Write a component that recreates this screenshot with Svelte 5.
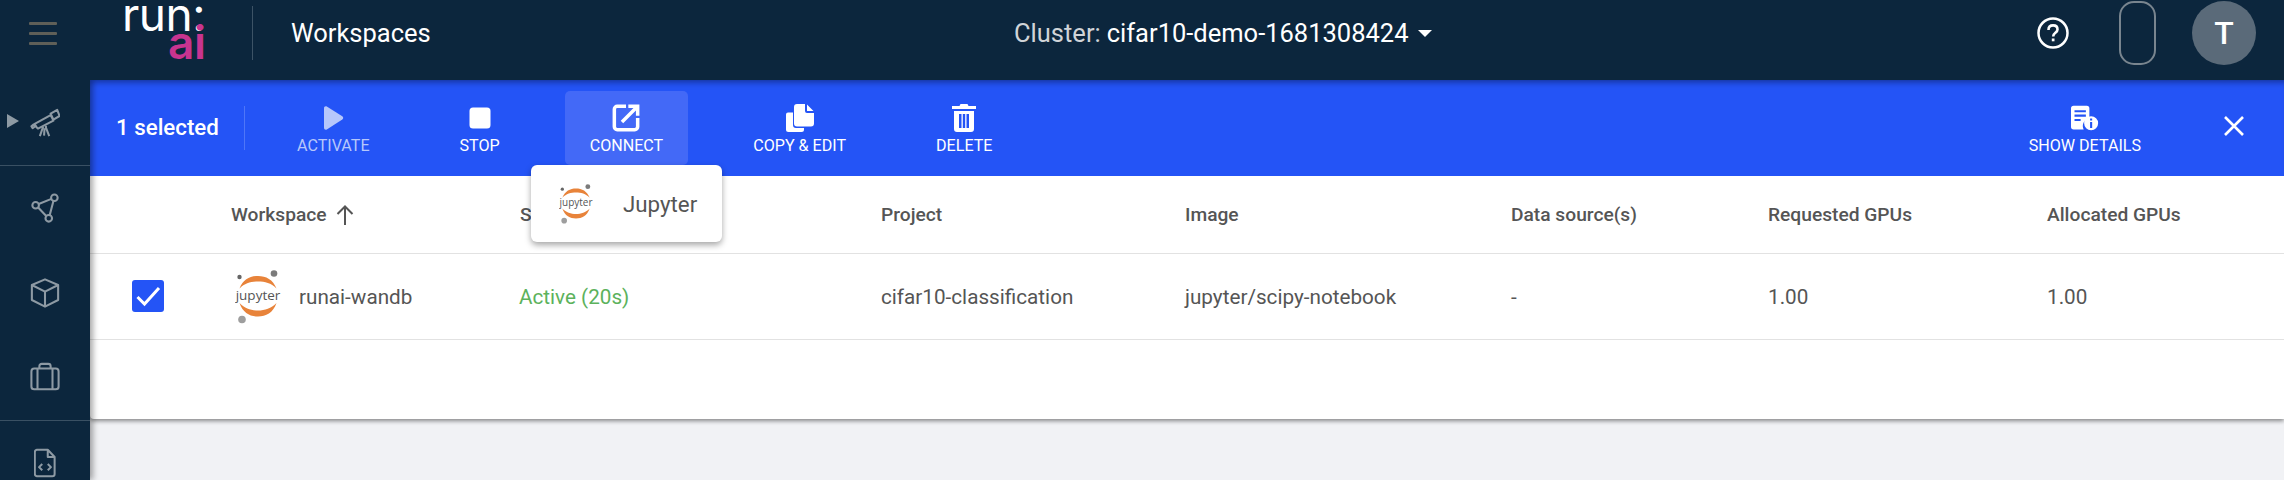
<script lang="ts">
	const columns = [
		{ label: 'Workspace', sort: true },
		{ label: 'Status' },
		{ label: 'Project' },
		{ label: 'Image' },
		{ label: 'Data source(s)' },
		{ label: 'Requested GPUs' },
		{ label: 'Allocated GPUs' }
	];

	const row = {
		status: 'Active (20s)',
		project: 'cifar10-classification',
		image: 'jupyter/scipy-notebook',
		sources: '-',
		requested: '1.00',
		allocated: '1.00'
	};
</script>

{#snippet jupyter(cls: string)}
	<svg class={cls} viewBox="0 0 46 54" aria-hidden="true">
		<path d="M4.500 18.500C8 9.500 15 6 23 6s15 3.500 18.500 12.500C36 13 30 11.500 23 11.500S10 13 4.500 18.500z" fill="#e8833a" />
		<path d="M4.500 33C8 43 15 46.500 23 46.500S38 43 41.500 33C36 38.500 30 40.500 23 40.500S10 38.500 4.500 33z" fill="#e8833a" />
		<circle cx="39" cy="3.500" r="3.300" fill="#7b7b7b" />
		<circle cx="4.500" cy="7" r="2.200" fill="#666" />
		<circle cx="7" cy="49.500" r="3.800" fill="#9e9e9e" />
		<text x="23" y="29.500" text-anchor="middle" class="jup-word">jupyter</text>
	</svg>
{/snippet}

<div class="page">
	<header class="topbar">
		<div class="burger"><span></span><span></span><span></span></div>
		<div class="logo">
			<span class="logo-run">run:</span>
			<span class="logo-ai">ai</span>
		</div>
		<div class="top-divider"></div>
		<div class="title">Workspaces</div>
		<div class="cluster">
			<span class="cluster-label">Cluster:</span> cifar10-demo-1681308424
			<span class="caret"></span>
		</div>
		<svg class="help" viewBox="0 0 32 32" aria-hidden="true">
			<circle cx="16" cy="16" r="14.500" fill="none" stroke="#fff" stroke-width="2.500" />
			<path d="M11.500 13c0-3 2-4.600 4.600-4.600s4.400 1.600 4.400 4c0 3.400-4.300 3.400-4.300 7" fill="none" stroke="#fff" stroke-width="2.600" />
			<rect x="14.800" y="21.500" width="2.700" height="2.800" fill="#fff" />
		</svg>
		<div class="pill"></div>
		<div class="avatar">T</div>
	</header>

	<nav class="sidebar">
		<div class="side-group first">
			<span class="side-arrow"></span>
			<svg class="side-icon" viewBox="0 0 32 32" aria-hidden="true">
				<path d="M1.500 19.500l2.500-2 1.300 2.200-2.500 1.800zM5 17l17-9.500 3 6-16.500 8.500-1.500-1.500zM22 6l7-4 2.500 6.500-6.500 4z" />
				<path d="M14 20l-3.500 10M17 19v2l3.500 9M15.500 21.500l-.5 8" />
			</svg>
		</div>
		<div class="side-group">
			<div class="side-item">
				<svg class="side-icon" viewBox="0 0 32 32" aria-hidden="true">
					<circle cx="6" cy="13" r="3.500" /><circle cx="26" cy="5" r="3.500" /><circle cx="20" cy="27" r="3.500" />
					<path d="M9.300 11.700L22.800 6.300M25 8.500L21 23.600M8.700 15.400L17.300 24.600" />
				</svg>
			</div>
			<div class="side-item">
				<svg class="side-icon" viewBox="0 0 32 32" aria-hidden="true">
					<path d="M16 1.500l14 6v16l-14 7-14-7v-16zM2 7.500l14 7 14-7M16 14.500v16" />
				</svg>
			</div>
			<div class="side-item">
				<svg class="side-icon" viewBox="0 0 32 32" aria-hidden="true">
					<rect x="1.500" y="7" width="29" height="22" rx="3" />
					<path d="M10 7V4.500A2.500 2.500 0 0 1 12.500 2h7A2.500 2.500 0 0 1 22 4.500V7M8 7v22M24 7v22" />
				</svg>
			</div>
		</div>
		<div class="side-group last">
			<svg class="side-icon file" viewBox="0 0 24 32" aria-hidden="true">
				<path d="M3 1.500h12l7.500 8V28a2.500 2.500 0 0 1-2.500 2.500H3A2.500 2.500 0 0 1 .9 28V4A2.500 2.500 0 0 1 3 1.500zM15 1.500v8h7.500" />
				<path d="M9 17l-3.500 3.500L9 24M15 17l3.500 3.500L15 24" />
			</svg>
		</div>
	</nav>

	<main class="main">
		<div class="card">
			<div class="toolbar">
				<div class="selected">1 selected</div>
				<div class="tool-divider"></div>
				<button class="tool disabled activate" type="button">
					<svg viewBox="0 0 24 24" aria-hidden="true"><path d="M3 2.200C3 .6 4.500-.2 5.800.6l15.500 9.700c1.200.8 1.200 2.500 0 3.300L5.800 23.400C4.500 24.200 3 23.400 3 21.800z" /></svg>
					ACTIVATE
				</button>
				<button class="tool" type="button">
					<svg viewBox="0 0 24 24" aria-hidden="true"><rect x="1.500" y="1.500" width="21" height="21" rx="3.500" /></svg>
					STOP
				</button>
				<button class="tool hovered" type="button">
					<svg class="wide" viewBox="0 0 24 24" aria-hidden="true"><path d="M19.500 20.500h-15a1 1 0 0 1-1-1v-15a1 1 0 0 1 1-1H12V.5H4.500A4 4 0 0 0 .5 4.500v15a4 4 0 0 0 4 4h15a4 4 0 0 0 4-4V12h-3v7.500a1 1 0 0 1-1 1zM14 .5v3h4.400L7.500 14.400l2.100 2.100L20.500 5.600V10h3V.5z" /></svg>
					CONNECT
				</button>
				<button class="tool" type="button">
					<svg class="wide" viewBox="0 0 28 28" aria-hidden="true">
						<path d="M2 8.500h5V21a3 3 0 0 0 3 3h8v1.500A2.500 2.500 0 0 1 15.500 28h-13A2.500 2.500 0 0 1 0 25.500V10.500a2 2 0 0 1 2-2z" />
						<path d="M11 0h8v7a2 2 0 0 0 2 2h7v10.500a3 3 0 0 1-3 3H11a3 3 0 0 1-3-3V3a3 3 0 0 1 3-3zM21 .5L27.500 7H21z" />
					</svg>
					COPY &amp; EDIT
				</button>
				<button class="tool" type="button">
					<svg class="wide" viewBox="0 0 24 28" aria-hidden="true">
						<path d="M8.500 0h7l1 2H24v3H0V2h7.500zM2 7h20v18a3 3 0 0 1-3 3H5a3 3 0 0 1-3-3zM7 10v14h2.500V10zM10.800 10v14h2.400V10zM14.500 10v14H17V10z" fill-rule="evenodd" />
					</svg>
					DELETE
				</button>
				<button class="tool details" type="button">
					<svg class="wide" viewBox="0 0 32 28" aria-hidden="true">
						<path d="M3 0h15a3 3 0 0 1 3 3v11.500a8.500 8.500 0 0 0-6.500 12.500H3a3 3 0 0 1-3-3V3a3 3 0 0 1 3-3zM4 5v2.500h13V5zM4 10v2.500h13V10zM4 15v2.500h7V15z" fill-rule="evenodd" />
						<path d="M23 12a8 8 0 1 1 0 16 8 8 0 0 1 0-16zM21.800 14.500v2.400h2.400v-2.400zM21.800 18.500v7h2.400v-7z" fill-rule="evenodd" />
					</svg>
					SHOW DETAILS
				</button>
				<button class="close" type="button" aria-label="Close">
					<svg viewBox="0 0 20 20" aria-hidden="true"><path d="M1 1l18 18M19 1L1 19" /></svg>
				</button>
			</div>

			<div class="grid-row head">
				{#each columns as c}
					<div class="cell">
						{c.label}
						{#if c.sort}
							<svg class="sort" viewBox="0 0 18 20" aria-hidden="true"><path d="M9 20V2M1.500 9L9 1.500 16.500 9" /></svg>
						{/if}
					</div>
				{/each}
			</div>

			<div class="grid-row body">
				<div class="name-cell">
					{@render jupyter('jup-row')}
					<span>runai-wandb</span>
				</div>
				<div class="cell status">{row.status}</div>
				<div class="cell">{row.project}</div>
				<div class="cell">{row.image}</div>
				<div class="cell">{row.sources}</div>
				<div class="cell">{row.requested}</div>
				<div class="cell">{row.allocated}</div>
				<span class="checkbox">
					<svg viewBox="0 0 32 32" aria-hidden="true"><path d="M5.500 17l7 7L27 8" /></svg>
				</span>
			</div>

			<div class="menu">
				{@render jupyter('jup-menu')}
				<span>Jupyter</span>
			</div>
		</div>
	</main>
</div>

<style>
	:global(body) {
		margin: 0;
		font-family: Roboto, 'Liberation Sans', sans-serif;
	}

	.page {
		display: grid;
		grid-template-columns: 90px 1fr;
		grid-template-rows: 80px 400px;
		width: 2284px;
		height: 480px;
		overflow: hidden;
		background: #f1f2f5;
	}

	.topbar {
		grid-column: 1 / 3;
		display: flex;
		align-items: center;
		height: 66px;
		padding-bottom: 14px;
		background: #0c263d;
		color: #fff;
		position: relative;
		z-index: 3;
	}

	.burger {
		display: flex;
		flex-direction: column;
		gap: 7px;
		width: 28px;
		margin-left: 29px;
	}

	.burger span {
		height: 3px;
		background: #5f5f58;
		border-radius: 1px;
	}

	.logo {
		position: relative;
		width: 90px;
		height: 66px;
		margin-left: 65px;
		flex-shrink: 0;
	}

	.logo-run,
	.logo-ai {
		position: absolute;
		font-family: Inter, Roboto, sans-serif;
		line-height: 1;
		font-size: 46px;
	}

	.logo-run {
		left: 0;
		top: -9px;
		font-weight: 400;
		color: #fff;
		letter-spacing: -0.5px;
	}

	.logo-ai {
		left: 46px;
		top: 19px;
		font-weight: 600;
		letter-spacing: -0.5px;
		color: #c8348f;
	}

	.top-divider {
		width: 1px;
		height: 54px;
		margin-left: 40px;
		background: #3d5366;
	}

	.title {
		margin-left: 38px;
		font-size: 25.500px;
		width: 723px;
	}

	.cluster {
		display: flex;
		align-items: center;
		gap: 6px;
		font-size: 25.500px;
		white-space: nowrap;
		width: 1105px;
	}

	.cluster-label {
		color: #d0d4d8;
	}

	.caret {
		width: 0;
		height: 0;
		margin-left: 3px;
		border-left: 7px solid transparent;
		border-right: 7px solid transparent;
		border-top: 7px solid #fff;
	}

	.help {
		position: absolute;
		left: 2037px;
		top: 17px;
		width: 32px;
		height: 32px;
	}

	.pill {
		position: absolute;
		left: 2119px;
		top: 1px;
		width: 37px;
		height: 64px;
		box-sizing: border-box;
		border: 2.500px solid #79858f;
		border-radius: 15px;
	}

	.avatar {
		position: absolute;
		left: 2192px;
		top: 1px;
		width: 64px;
		height: 64px;
		display: flex;
		align-items: center;
		justify-content: center;
		border-radius: 50%;
		background: #5a6a79;
		font-size: 32px;
		font-weight: 500;
	}

	.sidebar {
		display: flex;
		flex-direction: column;
		background: #0c263d;
		position: relative;
		z-index: 2;
		box-shadow: 3px 0 6px rgba(0, 0, 0, 0.35);
	}

	.side-group {
		border-bottom: 1px solid #3a5063;
		flex-shrink: 0;
	}

	.side-group.first {
		height: 85px;
		display: flex;
		align-items: center;
		justify-content: center;
		position: relative;
	}

	.side-group.last {
		border-bottom: none;
		display: flex;
		justify-content: center;
		padding-top: 27px;
	}

	.side-item {
		height: 84.500px;
		display: flex;
		align-items: center;
		justify-content: center;
	}

	.side-arrow {
		position: absolute;
		left: 7px;
		top: 34px;
		border-left: 12px solid #8e9aa4;
		border-top: 7px solid transparent;
		border-bottom: 7px solid transparent;
	}

	.side-icon {
		width: 30px;
		height: 30px;
		fill: none;
		stroke: #8e9aa4;
		stroke-width: 2.200;
		stroke-linejoin: round;
	}

	.side-icon.file {
		width: 22px;
		height: 30px;
	}

	.main {
		min-width: 0;
	}

	.card {
		position: relative;
		height: 339px;
		background: #fff;
		box-shadow: 0 2px 4px rgba(0, 0, 0, 0.45);
		border-bottom-left-radius: 4px;
		color: #555;
	}

	.toolbar {
		display: flex;
		align-items: flex-start;
		gap: 40px;
		height: 85px;
		padding: 11px 30px 0 26px;
		background: #2454f6;
		box-shadow: inset 0 7px 6px -5px rgba(8, 20, 70, 0.55);
		color: #fff;
	}

	.selected {
		height: 54px;
		margin-top: 9px;
		display: flex;
		align-items: center;
		width: 102px;
		font-size: 22.300px;
		font-weight: 500;
		white-space: nowrap;
		flex-shrink: 0;
	}

	.tool-divider {
		width: 1px;
		height: 44px;
		margin: 15px -13px 0 -14px;
		background: #4f76f8;
	}

	.tool {
		display: flex;
		flex-direction: column;
		align-items: center;
		height: 74px;
		padding: 13px 25px 0;
		box-sizing: border-box;
		gap: 4px;
		border: none;
		border-radius: 5px;
		background: none;
		color: #fff;
		font: 400 16.100px Roboto, sans-serif;
		white-space: nowrap;
	}

	.tool svg {
		width: 24px;
		height: 28px;
		fill: currentColor;
	}

	.tool svg.wide {
		width: 28px;
	}

	.tool.disabled {
		color: #b6c7fb;
	}

	.tool.hovered {
		background: #4369f7;
	}

	.tool.details {
		margin-left: auto;
	}

	.close {
		width: 40px;
		height: 40px;
		margin: 15px 0 0 8px;
		padding: 10px;
		background: none;
		border: none;
	}

	.close svg {
		display: block;
		fill: none;
		stroke: #fff;
		stroke-width: 2.600;
	}

	.grid-row {
		display: grid;
		grid-template-columns: 141px 289px 361px 304px 326px 257px 279px 1fr;
		align-items: center;
		border-bottom: 1px solid #e2e2e2;
		position: relative;
	}

	.grid-row.head {
		height: 77px;
		font-size: 19.200px;
		font-weight: 500;
	}

	.grid-row.head .cell:first-child {
		grid-column: 1 / 3;
		padding-left: 141px;
	}

	.grid-row.body {
		height: 85px;
		font-size: 20.700px;
	}

	.cell {
		display: flex;
		align-items: center;
		gap: 9px;
		white-space: nowrap;
	}

	.sort {
		width: 18px;
		height: 20px;
		fill: none;
		stroke: #555;
		stroke-width: 2;
	}

	.status {
		color: #5cb25c;
		margin-left: -1px;
	}

	.name-cell {
		grid-column: 1 / 3;
		display: flex;
		align-items: center;
		gap: 18px;
		padding-left: 145px;
		white-space: nowrap;
	}

	.jup-row {
		width: 46px;
		height: 54px;
	}

	.jup-menu {
		width: 34px;
		height: 40px;
	}

	.jup-word {
		font: 400 13.500px 'Open Sans', Roboto, sans-serif;
		fill: #555;
	}

	.checkbox {
		position: absolute;
		left: 42px;
		top: 26px;
		width: 32px;
		height: 32px;
		background: #2454f6;
		border-radius: 3px;
	}

	.checkbox svg {
		display: block;
		fill: none;
		stroke: #fff;
		stroke-width: 3;
	}

	.menu {
		position: absolute;
		left: 441px;
		top: 85px;
		width: 191px;
		height: 77px;
		box-sizing: border-box;
		display: flex;
		align-items: center;
		gap: 30px;
		padding: 0 0 0 28px;
		background: #fff;
		border-radius: 6px;
		box-shadow: 0 3px 6px rgba(0, 0, 0, 0.35);
		font-size: 22.300px;
	}
</style>
